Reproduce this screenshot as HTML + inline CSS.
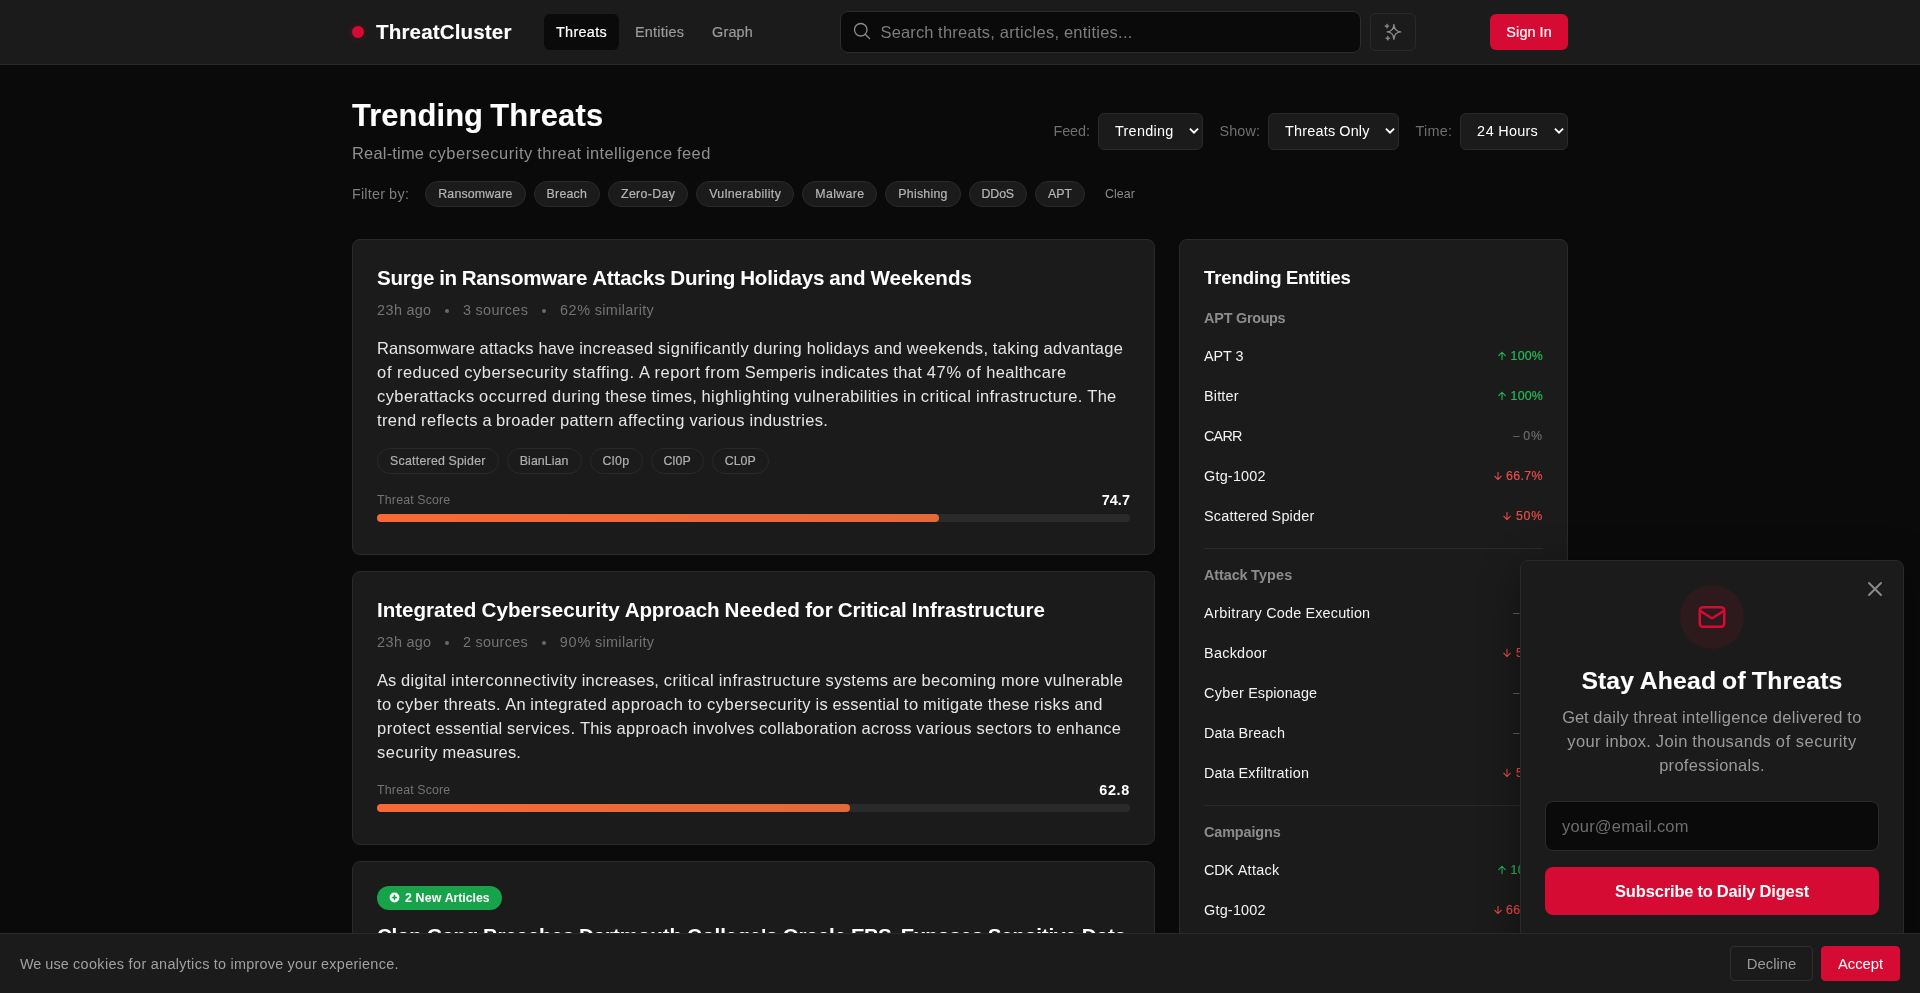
<!DOCTYPE html>
<html lang="en">
<head>
<meta charset="utf-8">
<title>ThreatCluster - Trending Threats</title>
<style>
*{box-sizing:border-box;margin:0;padding:0}
html,body{width:1920px;height:993px;overflow:hidden;background:#0a0a0a}
body{font-family:"Liberation Sans",Arial,sans-serif;color:#fff;font-size:16px;line-height:24px;position:relative;-webkit-font-smoothing:antialiased}
.t{display:inline-block;white-space:nowrap}
button{appearance:none;-webkit-appearance:none;border:0;padding:0;margin:0;background:none;font:inherit;color:inherit;display:block;cursor:pointer}
/* header */
.hdr,.main,.pop,.ck{will-change:transform}
.hdr{position:absolute;left:0;top:0;width:1920px;height:65px;background:#1b1b1b;border-bottom:1px solid #2a2a2a}
.hdr-in{position:absolute;left:352px;top:0;width:1216px;height:64px}
.dot{position:absolute;left:0;top:26px;width:12px;height:12px;border-radius:50%;background:#d50b33;box-shadow:0 0 6px rgba(213,11,51,.35)}
.logo{position:absolute;left:24px;top:18px;font-size:20px;line-height:28px;font-weight:700;color:#fff}
.nav a{position:absolute;top:14px;height:36px;line-height:36px;font-size:14px;font-weight:500;color:#9a9a9a;border-radius:6px;text-align:center;text-decoration:none}
.nav a.on{background:#0a0a0a;color:#fff}
.search{position:absolute;left:488px;top:11px;width:521px;height:42px;background:#0a0a0a;border:1px solid #2d2d2d;border-radius:8px}
.search svg{position:absolute;left:11px;top:9px}
.search .ph{position:absolute;left:39.5px;top:8px;line-height:24px;font-size:16px;color:#7d7d7d}
.ai{position:absolute;left:1018px;top:13px;width:46px;height:38px;border:1px solid #2a2a2a;border-radius:6px}
.ai svg{position:absolute;left:13px;top:9px}
.signin{position:absolute;left:1138px;top:14px;width:78px;height:36px;line-height:36px;border-radius:6px;background:#d50b33;color:#fff;font-size:14px;font-weight:500;text-align:center}
/* page head */
.main{position:absolute;left:352px;top:65px;width:1216px}
h1{position:absolute;left:0;top:32px;font-size:30px;line-height:36px;font-weight:700;color:#fff}
.sub{position:absolute;left:0;top:76px;font-size:16px;line-height:24px;color:#8f8f8f}
.ctl{position:absolute;top:48px;height:37px;font-size:14px}
.ctl.lab{line-height:35px;color:#6f6f6f}
.sel{background:#1b1b1b;border:1px solid #2a2a2a;border-radius:6px;color:#fff;line-height:33px;padding-left:16px}
.sel svg{position:absolute;right:2.4px;top:12.2px}
.frow{position:absolute;left:0;top:116px;height:26px}
.flab{position:absolute;left:0;top:3px;font-size:14px;line-height:20px;color:#7d7d7d}
.chip{position:absolute;top:0;height:26px;line-height:24px;border-radius:13px;background:#1b1b1b;border:1px solid #2a2a2a;font-size:12px;font-weight:500;color:#b5b5b5;text-align:center}
.clear{position:absolute;top:0;line-height:26px;font-size:12px;color:#8a8a8a}
/* cards */
.card{position:absolute;left:0;width:803px;background:#1b1b1b;border:1px solid #2a2a2a;border-radius:8px;padding:24px}
.card h2{font-size:20px;line-height:28px;font-weight:600;color:#fff;white-space:nowrap}
.meta{margin-top:8px;font-size:14px;line-height:20px;color:#737373;height:20px;position:relative}
.meta>span{position:absolute;top:0}
.meta i{position:absolute;top:8.5px;width:4px;height:4px;border-radius:50%;background:#6a6a6a}
.desc{margin-top:16px;font-size:16px;line-height:24px;color:#e5e5e5}
.desc .t{display:block}
.tags{margin-top:16px;height:26px;position:relative}
.tag{position:absolute;top:0;height:26px;line-height:24px;border-radius:13px;border:1px solid #292929;font-size:12px;font-weight:500;color:#b0b0b0;text-align:center}
.score{margin-top:16px;height:20px;position:relative}
.score .l{position:absolute;left:0;top:0;font-size:12px;line-height:20px;color:#737373}
.score .v{position:absolute;right:0;top:0;font-size:14px;line-height:20px;font-weight:600;color:#fff}
.bar{margin-top:4px;margin-bottom:8px;height:8px;border-radius:4px;background:#2a2a2a;position:relative}
.bar b{position:absolute;left:0;top:0;height:8px;border-radius:4px;background:linear-gradient(90deg,#f76a36,#e3693a)}
.badge{position:relative;width:125px;height:24px;border-radius:12px;background:#16a34a;margin-bottom:12px}
.badge svg{position:absolute;left:12px;top:6.1px}
.badge .t{position:absolute;left:28px;top:0;line-height:24px;font-size:12px;font-weight:600;color:#fff}
/* sidebar */
.side{position:absolute;left:827px;top:174px;width:389px;height:760px;background:#1b1b1b;border:1px solid #2a2a2a;border-radius:8px}
.side h3{position:absolute;left:24px;top:24px;font-size:18px;line-height:28px;font-weight:600;color:#fff}
.sh{position:absolute;left:24px;font-size:14px;line-height:20px;font-weight:600;color:#8c8c8c}
.row{position:absolute;left:24px;width:339px;height:40px}
.row .n{position:absolute;left:0;top:10px;font-size:14px;line-height:20px;color:#f2f2f2}
.row .p{position:absolute;right:0;top:10px;font-size:12px;line-height:20px;font-weight:500;white-space:nowrap}
.ar{display:inline-block;vertical-align:top;margin:5px 4.5px 0 0}
.up{color:#22bb5a}.dn{color:#ea4a48}.fl{color:#6b6b6b}
.div{position:absolute;left:24px;width:339px;height:1px;background:#2a2a2a}
/* popup */
.pop{position:absolute;left:1520px;top:560px;width:384px;height:420px;background:#1b1b1b;border:1px solid #2a2a2a;border-radius:8px;box-shadow:0 10px 40px rgba(0,0,0,.4)}
.pop .x{position:absolute;left:342px;top:16px}
.pop .circ{position:absolute;left:159px;top:24px;width:64px;height:64px;border-radius:50%;background:#2c1a1d}
.pop .circ svg{position:absolute;left:16px;top:16px}
.pop h4{position:absolute;left:0;width:382px;top:104px;text-align:center;font-size:24px;line-height:32px;font-weight:700;color:#fff}
.pop p{position:absolute;left:0;width:382px;top:144px;text-align:center;font-size:16px;line-height:24px;color:#9a9a9a}
.pop p .t{display:block;text-align:center}
.pop .inp{position:absolute;left:24px;top:240px;width:334px;height:50px;border-radius:8px;background:#0a0a0a;border:1px solid #2a2a2a}
.pop .inp .t{position:absolute;left:16px;top:12px;line-height:24px;font-size:16px;color:#6e6e6e}
.pop .btn{position:absolute;left:24px;top:306px;width:334px;height:48px;line-height:48px;border-radius:8px;background:#d50b33;text-align:center;font-size:16px;font-weight:600;color:#fff}
/* cookie */
.ck{position:absolute;left:0;top:933px;width:1920px;height:60px;background:#1b1b1b;border-top:1px solid #2a2a2a}
.ck .msg{position:absolute;left:20px;top:20px;font-size:14px;line-height:20px;color:#a0a0a0}
.ck .b{position:absolute;top:12px;height:35px;line-height:35px;border-radius:4px;font-family:"Liberation Sans",Arial,sans-serif;font-size:14.8px;text-align:center}
.ck .dec{left:1730px;width:83px;border:1px solid #2f2f2f;color:#9a9a9a}
.ck .acc{left:1821px;width:79px;border:1px solid #d50b33;background:#d50b33;color:#fff}
</style>
</head>
<body>
<header class="hdr"><div class="hdr-in">
<div class="dot"></div>
<div class="logo"><span class="t" style="font-size:20.6px;font-weight:700;letter-spacing:0.128px;-webkit-text-stroke:0.12px;">ThreatCluster</span></div>
<nav class="nav">
<a class="on" style="left:192px;width:75px"><span class="t" style="font-size:14.42px;font-weight:500;letter-spacing:0.337px;-webkit-text-stroke:0.2px;">Threats</span></a>
<a style="left:271px;width:73px"><span class="t" style="font-size:14.42px;font-weight:500;letter-spacing:0.246px;-webkit-text-stroke:0.2px;">Entities</span></a>
<a style="left:348px;width:65px"><span class="t" style="font-size:14.42px;font-weight:500;letter-spacing:0.161px;-webkit-text-stroke:0.2px;">Graph</span></a>
</nav>
<div class="search"><svg width="20" height="20" viewBox="0 0 24 24" fill="none" stroke="#8a8a8a" stroke-width="1.6" stroke-linecap="round" stroke-linejoin="round"><circle cx="10.5" cy="10.5" r="7.5"/><path d="m21 21-5.2-5.2"/></svg><div class="ph"><span class="t" style="font-size:16.48px;font-weight:400;word-spacing:-0.076px;"><span style="letter-spacing:0.152px">Search</span> <span style="letter-spacing:0.267px">threats,</span> <span style="letter-spacing:0.336px">articles,</span> <span style="letter-spacing:0.245px">entities...</span></span></div></div>
<button type="button" class="ai" aria-label="AI search"><svg width="18" height="18" viewBox="0 0 18 18" fill="none" stroke="#8a8a8a" stroke-width="1.3" stroke-linejoin="round"><path d="M9.9 1.5 Q10.25 8.55 16.7 8.9 Q10.25 9.25 9.9 16.3 Q9.55 9.25 3.1 8.9 Q9.55 8.55 9.9 1.5Z"/><path d="M3 0.8 Q3.2 2.9 5.3 3.1 Q3.2 3.3 3 5.4 Q2.8 3.3 0.7 3.1 Q2.8 2.9 3 0.8Z" fill="#8a8a8a" stroke-width="0.6"/><path d="M3.8 12.9 Q4 15 6.1 15.2 Q4 15.4 3.8 17.5 Q3.6 15.4 1.5 15.2 Q3.6 15 3.8 12.9Z" fill="#8a8a8a" stroke-width="0.6"/></svg></button>
<button type="button" class="signin"><span class="t" style="font-size:14.42px;font-weight:500;word-spacing:-0.270px;-webkit-text-stroke:0.2px;"><span style="letter-spacing:0.209px">Sign</span> <span style="letter-spacing:0.111px">In</span></span></button>
</div></header>
<main class="main">
<h1><span class="t" style="font-size:30.9px;font-weight:700;word-spacing:-1.478px;position:relative;top:1.00px;-webkit-text-stroke:0.12px;"><span style="letter-spacing:0.076px">Trending</span> <span style="letter-spacing:0.250px">Threats</span></span></h1>
<div class="sub"><span class="t" style="font-size:16.48px;font-weight:400;word-spacing:-0.076px;"><span style="letter-spacing:0.195px">Real-time</span> <span style="letter-spacing:0.546px">cybersecurity</span> <span style="letter-spacing:0.341px">threat</span> <span style="letter-spacing:0.335px">intelligence</span> <span style="letter-spacing:0.463px">feed</span></span></div>
<div class="ctl lab" style="left:701.4px"><span class="t" style="font-size:14.42px;font-weight:400;letter-spacing:-0.040px;position:relative;top:1.00px;">Feed:</span></div>
<div class="ctl sel" style="left:746px;width:105px"><span class="t" style="font-size:14.42px;font-weight:400;letter-spacing:0.277px;position:relative;top:1.00px;">Trending</span><svg width="12" height="10" viewBox="0 0 12 10" fill="none" stroke="#fff" stroke-width="1.9" stroke-linecap="square"><path d="M2.6 3.3 6 6.7 9.4 3.3"/></svg></div>
<div class="ctl lab" style="left:867.4px"><span class="t" style="font-size:14.42px;font-weight:400;letter-spacing:0.171px;position:relative;top:1.00px;">Show:</span></div>
<div class="ctl sel" style="left:916px;width:131px"><span class="t" style="font-size:14.42px;font-weight:400;word-spacing:-0.065px;position:relative;top:1.00px;"><span style="letter-spacing:0.215px">Threats</span> <span style="letter-spacing:0.171px">Only</span></span><svg width="12" height="10" viewBox="0 0 12 10" fill="none" stroke="#fff" stroke-width="1.9" stroke-linecap="square"><path d="M2.6 3.3 6 6.7 9.4 3.3"/></svg></div>
<div class="ctl lab" style="left:1063.4px"><span class="t" style="font-size:14.42px;font-weight:400;letter-spacing:0.281px;position:relative;top:1.00px;">Time:</span></div>
<div class="ctl sel" style="left:1108px;width:108px"><span class="t" style="font-size:14.42px;font-weight:400;word-spacing:-0.065px;position:relative;top:1.00px;"><span style="letter-spacing:0.670px">24</span> <span style="letter-spacing:0.262px">Hours</span></span><svg width="12" height="10" viewBox="0 0 12 10" fill="none" stroke="#fff" stroke-width="1.9" stroke-linecap="square"><path d="M2.6 3.3 6 6.7 9.4 3.3"/></svg></div>
<div class="frow">
<div class="flab"><span class="t" style="font-size:14.42px;font-weight:400;word-spacing:-0.065px;"><span style="letter-spacing:0.186px">Filter</span> <span style="letter-spacing:0.327px">by:</span></span></div>
<button type="button" class="chip" style="left:73.30px;width:100.33px"><span class="t" style="font-size:12.36px;font-weight:500;letter-spacing:0.152px;-webkit-text-stroke:0.2px;">Ransomware</span></button>
<button type="button" class="chip" style="left:181.63px;width:66.42px"><span class="t" style="font-size:12.36px;font-weight:500;letter-spacing:0.210px;-webkit-text-stroke:0.2px;">Breach</span></button>
<button type="button" class="chip" style="left:256.05px;width:80.13px"><span class="t" style="font-size:12.36px;font-weight:500;letter-spacing:0.328px;-webkit-text-stroke:0.2px;">Zero-Day</span></button>
<button type="button" class="chip" style="left:344.18px;width:98.14px"><span class="t" style="font-size:12.36px;font-weight:500;letter-spacing:0.406px;-webkit-text-stroke:0.2px;">Vulnerability</span></button>
<button type="button" class="chip" style="left:450.33px;width:75.00px"><span class="t" style="font-size:12.36px;font-weight:500;letter-spacing:0.328px;-webkit-text-stroke:0.2px;">Malware</span></button>
<button type="button" class="chip" style="left:533.33px;width:75.30px"><span class="t" style="font-size:12.36px;font-weight:500;letter-spacing:0.236px;-webkit-text-stroke:0.2px;">Phishing</span></button>
<button type="button" class="chip" style="left:616.63px;width:58.32px"><span class="t" style="font-size:12.36px;font-weight:500;letter-spacing:-0.162px;-webkit-text-stroke:0.2px;">DDoS</span></button>
<button type="button" class="chip" style="left:682.95px;width:50.04px"><span class="t" style="font-size:12.36px;font-weight:500;letter-spacing:0.001px;-webkit-text-stroke:0.2px;">APT</span></button>
<button type="button" class="clear" style="left:752.99px"><span class="t" style="font-size:12.36px;font-weight:400;letter-spacing:0.101px;">Clear</span></button>
</div>
<article class="card" style="top:174px">
<h2><span class="t" style="font-size:20.6px;font-weight:600;word-spacing:-0.683px;"><span style="letter-spacing:-0.255px">Surge</span> <span style="letter-spacing:-0.415px">in</span> <span style="letter-spacing:-0.279px">Ransomware</span> <span style="letter-spacing:-0.177px">Attacks</span> <span style="letter-spacing:-0.257px">During</span> <span style="letter-spacing:-0.236px">Holidays</span> <span style="letter-spacing:-0.137px">and</span> <span style="letter-spacing:0.003px">Weekends</span></span></h2>
<div class="meta"><span style="left:0.00px"><span class="t" style="font-size:14.42px;font-weight:400;word-spacing:-0.065px;"><span style="letter-spacing:0.476px">23h</span> <span style="letter-spacing:0.269px">ago</span></span></span><i style="left:68.09px"></i><span style="left:85.94px"><span class="t" style="font-size:14.42px;font-weight:400;word-spacing:-0.065px;"><span style="letter-spacing:0.635px">3</span> <span style="letter-spacing:0.315px">sources</span></span></span><i style="left:165.03px"></i><span style="left:182.88px"><span class="t" style="font-size:14.42px;font-weight:400;word-spacing:-0.065px;"><span style="letter-spacing:0.711px">62%</span> <span style="letter-spacing:0.327px">similarity</span></span></span></div>
<p class="desc"><span class="t" style="font-size:16.48px;font-weight:400;word-spacing:-0.076px;"><span style="letter-spacing:0.086px">Ransomware</span> <span style="letter-spacing:0.331px">attacks</span> <span style="letter-spacing:0.127px">have</span> <span style="letter-spacing:0.318px">increased</span> <span style="letter-spacing:0.465px">significantly</span> <span style="letter-spacing:0.482px">during</span> <span style="letter-spacing:0.296px">holidays</span> <span style="letter-spacing:0.252px">and</span> <span style="letter-spacing:0.309px">weekends,</span> <span style="letter-spacing:0.379px">taking</span> <span style="letter-spacing:0.303px">advantage</span></span><span class="t" style="font-size:16.48px;font-weight:400;word-spacing:-0.076px;"><span style="letter-spacing:0.890px">of</span> <span style="letter-spacing:0.442px">reduced</span> <span style="letter-spacing:0.546px">cybersecurity</span> <span style="letter-spacing:0.482px">staffing.</span> <span style="letter-spacing:0.055px">A</span> <span style="letter-spacing:0.494px">report</span> <span style="letter-spacing:0.588px">from</span> <span style="letter-spacing:0.221px">Semperis</span> <span style="letter-spacing:0.348px">indicates</span> <span style="letter-spacing:0.361px">that</span> <span style="letter-spacing:0.713px">47%</span> <span style="letter-spacing:0.890px">of</span> <span style="letter-spacing:0.319px">healthcare</span></span><span class="t" style="font-size:16.48px;font-weight:400;word-spacing:-0.076px;"><span style="letter-spacing:0.425px">cyberattacks</span> <span style="letter-spacing:0.552px">occurred</span> <span style="letter-spacing:0.482px">during</span> <span style="letter-spacing:0.302px">these</span> <span style="letter-spacing:0.264px">times,</span> <span style="letter-spacing:0.390px">highlighting</span> <span style="letter-spacing:0.310px">vulnerabilities</span> <span style="letter-spacing:0.255px">in</span> <span style="letter-spacing:0.486px">critical</span> <span style="letter-spacing:0.418px">infrastructure.</span> <span style="letter-spacing:0.246px">The</span></span><span class="t" style="font-size:16.48px;font-weight:400;word-spacing:-0.076px;"><span style="letter-spacing:0.407px">trend</span> <span style="letter-spacing:0.474px">reflects</span> <span style="letter-spacing:-0.175px">a</span> <span style="letter-spacing:0.382px">broader</span> <span style="letter-spacing:0.377px">pattern</span> <span style="letter-spacing:0.513px">affecting</span> <span style="letter-spacing:0.351px">various</span> <span style="letter-spacing:0.340px">industries.</span></span></p>
<div class="tags"><div class="tag" style="left:0.00px;width:121.75px"><span class="t" style="font-size:12.36px;font-weight:500;word-spacing:-0.235px;-webkit-text-stroke:0.2px;"><span style="letter-spacing:0.261px">Scattered</span> <span style="letter-spacing:0.262px">Spider</span></span></div><div class="tag" style="left:129.75px;width:74.78px"><span class="t" style="font-size:12.36px;font-weight:500;letter-spacing:0.084px;-webkit-text-stroke:0.2px;">BianLian</span></div><div class="tag" style="left:212.53px;width:52.99px"><span class="t" style="font-size:12.36px;font-weight:500;letter-spacing:0.392px;-webkit-text-stroke:0.2px;">Cl0p</span></div><div class="tag" style="left:273.52px;width:53.27px"><span class="t" style="font-size:12.36px;font-weight:500;letter-spacing:0.120px;-webkit-text-stroke:0.2px;">Cl0P</span></div><div class="tag" style="left:334.79px;width:57.03px"><span class="t" style="font-size:12.36px;font-weight:500;letter-spacing:0.029px;-webkit-text-stroke:0.2px;">CL0P</span></div></div>
<div class="score"><span class="l"><span class="t" style="font-size:12.36px;font-weight:400;word-spacing:-0.059px;"><span style="letter-spacing:0.203px">Threat</span> <span style="letter-spacing:0.156px">Score</span></span></span><span class="v"><span class="t" style="font-size:14.42px;font-weight:600;letter-spacing:0.074px;">74.7</span></span></div><div class="bar"><b style="width:74.7%"></b></div>
</article>
<article class="card" style="top:506px">
<h2><span class="t" style="font-size:20.6px;font-weight:600;word-spacing:-0.683px;"><span style="letter-spacing:-0.017px">Integrated</span> <span style="letter-spacing:0.066px">Cybersecurity</span> <span style="letter-spacing:-0.168px">Approach</span> <span style="letter-spacing:0.206px">Needed</span> <span style="letter-spacing:-0.013px">for</span> <span style="letter-spacing:-0.106px">Critical</span> <span style="letter-spacing:-0.042px">Infrastructure</span></span></h2>
<div class="meta"><span style="left:0.00px"><span class="t" style="font-size:14.42px;font-weight:400;word-spacing:-0.065px;"><span style="letter-spacing:0.476px">23h</span> <span style="letter-spacing:0.269px">ago</span></span></span><i style="left:68.09px"></i><span style="left:85.94px"><span class="t" style="font-size:14.42px;font-weight:400;word-spacing:-0.065px;"><span style="letter-spacing:0.526px">2</span> <span style="letter-spacing:0.315px">sources</span></span></span><i style="left:164.92px"></i><span style="left:182.77px"><span class="t" style="font-size:14.42px;font-weight:400;word-spacing:-0.065px;"><span style="letter-spacing:0.809px">90%</span> <span style="letter-spacing:0.327px">similarity</span></span></span></div>
<p class="desc"><span class="t" style="font-size:16.48px;font-weight:400;word-spacing:-0.076px;"><span style="letter-spacing:0.133px">As</span> <span style="letter-spacing:0.357px">digital</span> <span style="letter-spacing:0.473px">interconnectivity</span> <span style="letter-spacing:0.247px">increases,</span> <span style="letter-spacing:0.486px">critical</span> <span style="letter-spacing:0.446px">infrastructure</span> <span style="letter-spacing:0.337px">systems</span> <span style="letter-spacing:0.089px">are</span> <span style="letter-spacing:0.451px">becoming</span> <span style="letter-spacing:0.294px">more</span> <span style="letter-spacing:0.313px">vulnerable</span></span><span class="t" style="font-size:16.48px;font-weight:400;word-spacing:-0.076px;"><span style="letter-spacing:0.469px">to</span> <span style="letter-spacing:0.555px">cyber</span> <span style="letter-spacing:0.267px">threats.</span> <span style="letter-spacing:0.174px">An</span> <span style="letter-spacing:0.351px">integrated</span> <span style="letter-spacing:0.375px">approach</span> <span style="letter-spacing:0.469px">to</span> <span style="letter-spacing:0.546px">cybersecurity</span> <span style="letter-spacing:0.214px">is</span> <span style="letter-spacing:0.219px">essential</span> <span style="letter-spacing:0.469px">to</span> <span style="letter-spacing:0.317px">mitigate</span> <span style="letter-spacing:0.302px">these</span> <span style="letter-spacing:0.395px">risks</span> <span style="letter-spacing:0.252px">and</span></span><span class="t" style="font-size:16.48px;font-weight:400;word-spacing:-0.076px;"><span style="letter-spacing:0.512px">protect</span> <span style="letter-spacing:0.219px">essential</span> <span style="letter-spacing:0.385px">services.</span> <span style="letter-spacing:0.249px">This</span> <span style="letter-spacing:0.375px">approach</span> <span style="letter-spacing:0.284px">involves</span> <span style="letter-spacing:0.357px">collaboration</span> <span style="letter-spacing:0.310px">across</span> <span style="letter-spacing:0.351px">various</span> <span style="letter-spacing:0.425px">sectors</span> <span style="letter-spacing:0.469px">to</span> <span style="letter-spacing:0.280px">enhance</span></span><span class="t" style="font-size:16.48px;font-weight:400;word-spacing:-0.076px;"><span style="letter-spacing:0.540px">security</span> <span style="letter-spacing:0.183px">measures.</span></span></p>
<div class="score"><span class="l"><span class="t" style="font-size:12.36px;font-weight:400;word-spacing:-0.059px;"><span style="letter-spacing:0.203px">Threat</span> <span style="letter-spacing:0.156px">Score</span></span></span><span class="v"><span class="t" style="font-size:14.42px;font-weight:600;letter-spacing:0.674px;">62.8</span></span></div><div class="bar"><b style="width:62.8%"></b></div>
</article>
<article class="card" style="top:796px;height:300px">
<div class="badge"><svg width="11" height="11" viewBox="0 0 11 11"><circle cx="5.5" cy="5.5" r="4.9" fill="#fff"/><path d="M5.5 3.7V7.3M3.7 5.5H7.3" fill="none" stroke="#16a34a" stroke-width="1.7" stroke-linecap="round"/></svg><span class="t" style="font-size:12.36px;font-weight:600;word-spacing:-0.410px;"><span style="letter-spacing:0.603px">2</span> <span style="letter-spacing:0.228px">New</span> <span style="letter-spacing:-0.054px">Articles</span></span></div>
<h2><span class="t" style="font-size:20.6px;font-weight:600;word-spacing:-0.683px;"><span style="letter-spacing:-0.281px">Clop</span> <span style="letter-spacing:-0.355px">Gang</span> <span style="letter-spacing:-0.229px">Breaches</span> <span style="letter-spacing:-0.115px">Dartmouth</span> <span style="letter-spacing:-0.017px">College&#x27;s</span> <span style="letter-spacing:-0.132px">Oracle</span> <span style="letter-spacing:-0.847px">EBS,</span> <span style="letter-spacing:-0.395px">Exposes</span> <span style="letter-spacing:-0.183px">Sensitive</span> <span style="letter-spacing:-0.017px">Data</span></span></h2>
</article>
<aside class="side">
<h3><span class="t" style="font-size:18.54px;font-weight:600;word-spacing:-0.613px;"><span style="letter-spacing:-0.095px">Trending</span> <span style="letter-spacing:-0.295px">Entities</span></span></h3>
<div class="sh" style="top:68px"><span class="t" style="font-size:14.42px;font-weight:600;word-spacing:-0.475px;"><span style="letter-spacing:-0.118px">APT</span> <span style="letter-spacing:-0.327px">Groups</span></span></div>
<div class="row" style="top:96px"><span class="n"><span class="t" style="font-size:14.42px;font-weight:400;word-spacing:-0.065px;"><span style="letter-spacing:-0.127px">APT</span> <span style="letter-spacing:0.635px">3</span></span></span><span class="p up"><svg class="ar" width="8" height="10" viewBox="0 0 8 10" fill="none" stroke="currentColor" stroke-width="1.05" stroke-linecap="round" stroke-linejoin="round"><path d="M4 8.6V1.25M0.7 4.6 4 1.25 7.3 4.6"/></svg><span class="t" style="font-size:12.36px;font-weight:500;letter-spacing:0.195px;-webkit-text-stroke:0.2px;">100%</span></span></div>
<div class="row" style="top:136px"><span class="n"><span class="t" style="font-size:14.42px;font-weight:400;letter-spacing:0.174px;">Bitter</span></span><span class="p up"><svg class="ar" width="8" height="10" viewBox="0 0 8 10" fill="none" stroke="currentColor" stroke-width="1.05" stroke-linecap="round" stroke-linejoin="round"><path d="M4 8.6V1.25M0.7 4.6 4 1.25 7.3 4.6"/></svg><span class="t" style="font-size:12.36px;font-weight:500;letter-spacing:0.195px;-webkit-text-stroke:0.2px;">100%</span></span></div>
<div class="row" style="top:176px"><span class="n"><span class="t" style="font-size:14.42px;font-weight:400;letter-spacing:-0.797px;">CARR</span></span><span class="p fl"><span class="t" style="font-size:12.36px;font-weight:500;word-spacing:-0.235px;-webkit-text-stroke:0.2px;"><span style="font-size:10.79px;position:relative;top:-1px;left:-0.8px">–</span> <span style="letter-spacing:0.900px">0%</span></span></span></div>
<div class="row" style="top:216px"><span class="n"><span class="t" style="font-size:14.42px;font-weight:400;letter-spacing:0.218px;">Gtg-1002</span></span><span class="p dn"><svg class="ar" width="8" height="10" viewBox="0 0 8 10" fill="none" stroke="currentColor" stroke-width="1.05" stroke-linecap="round" stroke-linejoin="round"><path d="M4 1.2V8.55M0.7 5.2 4 8.55 7.3 5.2"/></svg><span class="t" style="font-size:12.36px;font-weight:500;letter-spacing:0.376px;-webkit-text-stroke:0.2px;">66.7%</span></span></div>
<div class="row" style="top:256px"><span class="n"><span class="t" style="font-size:14.42px;font-weight:400;word-spacing:-0.065px;"><span style="letter-spacing:0.215px">Scattered</span> <span style="letter-spacing:0.218px">Spider</span></span></span><span class="p dn"><svg class="ar" width="8" height="10" viewBox="0 0 8 10" fill="none" stroke="currentColor" stroke-width="1.05" stroke-linecap="round" stroke-linejoin="round"><path d="M4 1.2V8.55M0.7 5.2 4 8.55 7.3 5.2"/></svg><span class="t" style="font-size:12.36px;font-weight:500;letter-spacing:0.782px;-webkit-text-stroke:0.2px;">50%</span></span></div>
<div class="div" style="top:308px"></div>
<div class="sh" style="top:325px"><span class="t" style="font-size:14.42px;font-weight:600;word-spacing:-0.475px;"><span style="letter-spacing:-0.085px">Attack</span> <span style="letter-spacing:0.149px">Types</span></span></div>
<div class="row" style="top:353px"><span class="n"><span class="t" style="font-size:14.42px;font-weight:400;word-spacing:-0.065px;"><span style="letter-spacing:0.417px">Arbitrary</span> <span style="letter-spacing:0.229px">Code</span> <span style="letter-spacing:0.172px">Execution</span></span></span><span class="p fl"><span class="t" style="font-size:12.36px;font-weight:500;word-spacing:-0.235px;-webkit-text-stroke:0.2px;"><span style="font-size:10.79px;position:relative;top:-1px;left:-0.8px">–</span> <span style="letter-spacing:0.900px">0%</span></span></span></div>
<div class="row" style="top:393px"><span class="n"><span class="t" style="font-size:14.42px;font-weight:400;letter-spacing:0.270px;">Backdoor</span></span><span class="p dn"><svg class="ar" width="8" height="10" viewBox="0 0 8 10" fill="none" stroke="currentColor" stroke-width="1.05" stroke-linecap="round" stroke-linejoin="round"><path d="M4 1.2V8.55M0.7 5.2 4 8.55 7.3 5.2"/></svg><span class="t" style="font-size:12.36px;font-weight:500;letter-spacing:0.782px;-webkit-text-stroke:0.2px;">50%</span></span></div>
<div class="row" style="top:433px"><span class="n"><span class="t" style="font-size:14.42px;font-weight:400;word-spacing:-0.065px;"><span style="letter-spacing:0.348px">Cyber</span> <span style="letter-spacing:0.106px">Espionage</span></span></span><span class="p fl"><span class="t" style="font-size:12.36px;font-weight:500;word-spacing:-0.235px;-webkit-text-stroke:0.2px;"><span style="font-size:10.79px;position:relative;top:-1px;left:-0.8px">–</span> <span style="letter-spacing:0.900px">0%</span></span></span></div>
<div class="row" style="top:473px"><span class="n"><span class="t" style="font-size:14.42px;font-weight:400;word-spacing:-0.065px;"><span style="letter-spacing:0.011px">Data</span> <span style="letter-spacing:0.165px">Breach</span></span></span><span class="p fl"><span class="t" style="font-size:12.36px;font-weight:500;word-spacing:-0.235px;-webkit-text-stroke:0.2px;"><span style="font-size:10.79px;position:relative;top:-1px;left:-0.8px">–</span> <span style="letter-spacing:0.900px">0%</span></span></span></div>
<div class="row" style="top:513px"><span class="n"><span class="t" style="font-size:14.42px;font-weight:400;word-spacing:-0.065px;"><span style="letter-spacing:0.011px">Data</span> <span style="letter-spacing:0.299px">Exfiltration</span></span></span><span class="p dn"><svg class="ar" width="8" height="10" viewBox="0 0 8 10" fill="none" stroke="currentColor" stroke-width="1.05" stroke-linecap="round" stroke-linejoin="round"><path d="M4 1.2V8.55M0.7 5.2 4 8.55 7.3 5.2"/></svg><span class="t" style="font-size:12.36px;font-weight:500;letter-spacing:0.782px;-webkit-text-stroke:0.2px;">50%</span></span></div>
<div class="div" style="top:565px"></div>
<div class="sh" style="top:582px"><span class="t" style="font-size:14.42px;font-weight:600;letter-spacing:-0.123px;">Campaigns</span></div>
<div class="row" style="top:610px"><span class="n"><span class="t" style="font-size:14.42px;font-weight:400;word-spacing:-0.065px;"><span style="letter-spacing:-0.227px">CDK</span> <span style="letter-spacing:0.297px">Attack</span></span></span><span class="p up"><svg class="ar" width="8" height="10" viewBox="0 0 8 10" fill="none" stroke="currentColor" stroke-width="1.05" stroke-linecap="round" stroke-linejoin="round"><path d="M4 8.6V1.25M0.7 4.6 4 1.25 7.3 4.6"/></svg><span class="t" style="font-size:12.36px;font-weight:500;letter-spacing:0.195px;-webkit-text-stroke:0.2px;">100%</span></span></div>
<div class="row" style="top:650px"><span class="n"><span class="t" style="font-size:14.42px;font-weight:400;letter-spacing:0.218px;">Gtg-1002</span></span><span class="p dn"><svg class="ar" width="8" height="10" viewBox="0 0 8 10" fill="none" stroke="currentColor" stroke-width="1.05" stroke-linecap="round" stroke-linejoin="round"><path d="M4 1.2V8.55M0.7 5.2 4 8.55 7.3 5.2"/></svg><span class="t" style="font-size:12.36px;font-weight:500;letter-spacing:0.376px;-webkit-text-stroke:0.2px;">66.7%</span></span></div>
</aside>
</main>
<section class="pop">
<svg class="x" width="24" height="24" viewBox="0 0 24 24" fill="none" stroke="#8a8a8a" stroke-width="2" stroke-linecap="round"><path d="M18 6 6 18M6 6l12 12"/></svg>
<div class="circ"><svg width="32" height="32" viewBox="0 0 32 32" fill="none" stroke="#d50b33" stroke-width="2.5" stroke-linecap="round" stroke-linejoin="round"><rect x="3.75" y="6.35" width="24.5" height="19.5" rx="3"/><path d="M4.2 9.9 14.6 16.5a2.6 2.6 0 0 0 2.8 0L27.8 9.9"/></svg></div>
<h4><span class="t" style="font-size:24.72px;font-weight:700;word-spacing:-1.184px;-webkit-text-stroke:0.12px;"><span style="letter-spacing:0.095px">Stay</span> <span style="letter-spacing:0.182px">Ahead</span> <span style="letter-spacing:0.469px">of</span> <span style="letter-spacing:0.197px">Threats</span></span></h4>
<p><span class="t" style="font-size:16.48px;font-weight:400;word-spacing:-0.076px;"><span style="letter-spacing:-0.015px">Get</span> <span style="letter-spacing:0.346px">daily</span> <span style="letter-spacing:0.341px">threat</span> <span style="letter-spacing:0.335px">intelligence</span> <span style="letter-spacing:0.326px">delivered</span> <span style="letter-spacing:0.469px">to</span></span><span class="t" style="font-size:16.48px;font-weight:400;word-spacing:-0.076px;"><span style="letter-spacing:0.430px">your</span> <span style="letter-spacing:0.293px">inbox.</span> <span style="letter-spacing:0.461px">Join</span> <span style="letter-spacing:0.320px">thousands</span> <span style="letter-spacing:0.890px">of</span> <span style="letter-spacing:0.540px">security</span></span><span class="t" style="font-size:16.48px;font-weight:400;letter-spacing:0.289px;">professionals.</span></p>
<div class="inp"><span class="t" style="font-size:16.48px;font-weight:400;letter-spacing:0.204px;">your@email.com</span></div>
<button type="button" class="btn"><span class="t" style="font-size:16.48px;font-weight:600;word-spacing:-0.544px;"><span style="letter-spacing:-0.132px">Subscribe</span> <span style="letter-spacing:-0.155px">to</span> <span style="letter-spacing:-0.140px">Daily</span> <span style="letter-spacing:-0.114px">Digest</span></span></button>
</section>
<footer class="ck">
<div class="msg"><span class="t" style="font-size:14.42px;font-weight:400;word-spacing:-0.065px;"><span style="letter-spacing:-0.051px">We</span> <span style="letter-spacing:0.201px">use</span> <span style="letter-spacing:0.367px">cookies</span> <span style="letter-spacing:0.542px">for</span> <span style="letter-spacing:0.315px">analytics</span> <span style="letter-spacing:0.412px">to</span> <span style="letter-spacing:0.272px">improve</span> <span style="letter-spacing:0.378px">your</span> <span style="letter-spacing:0.296px">experience.</span></span></div>
<button type="button" class="b dec">Decline</button><button type="button" class="b acc">Accept</button>
</footer>
</body>
</html>
